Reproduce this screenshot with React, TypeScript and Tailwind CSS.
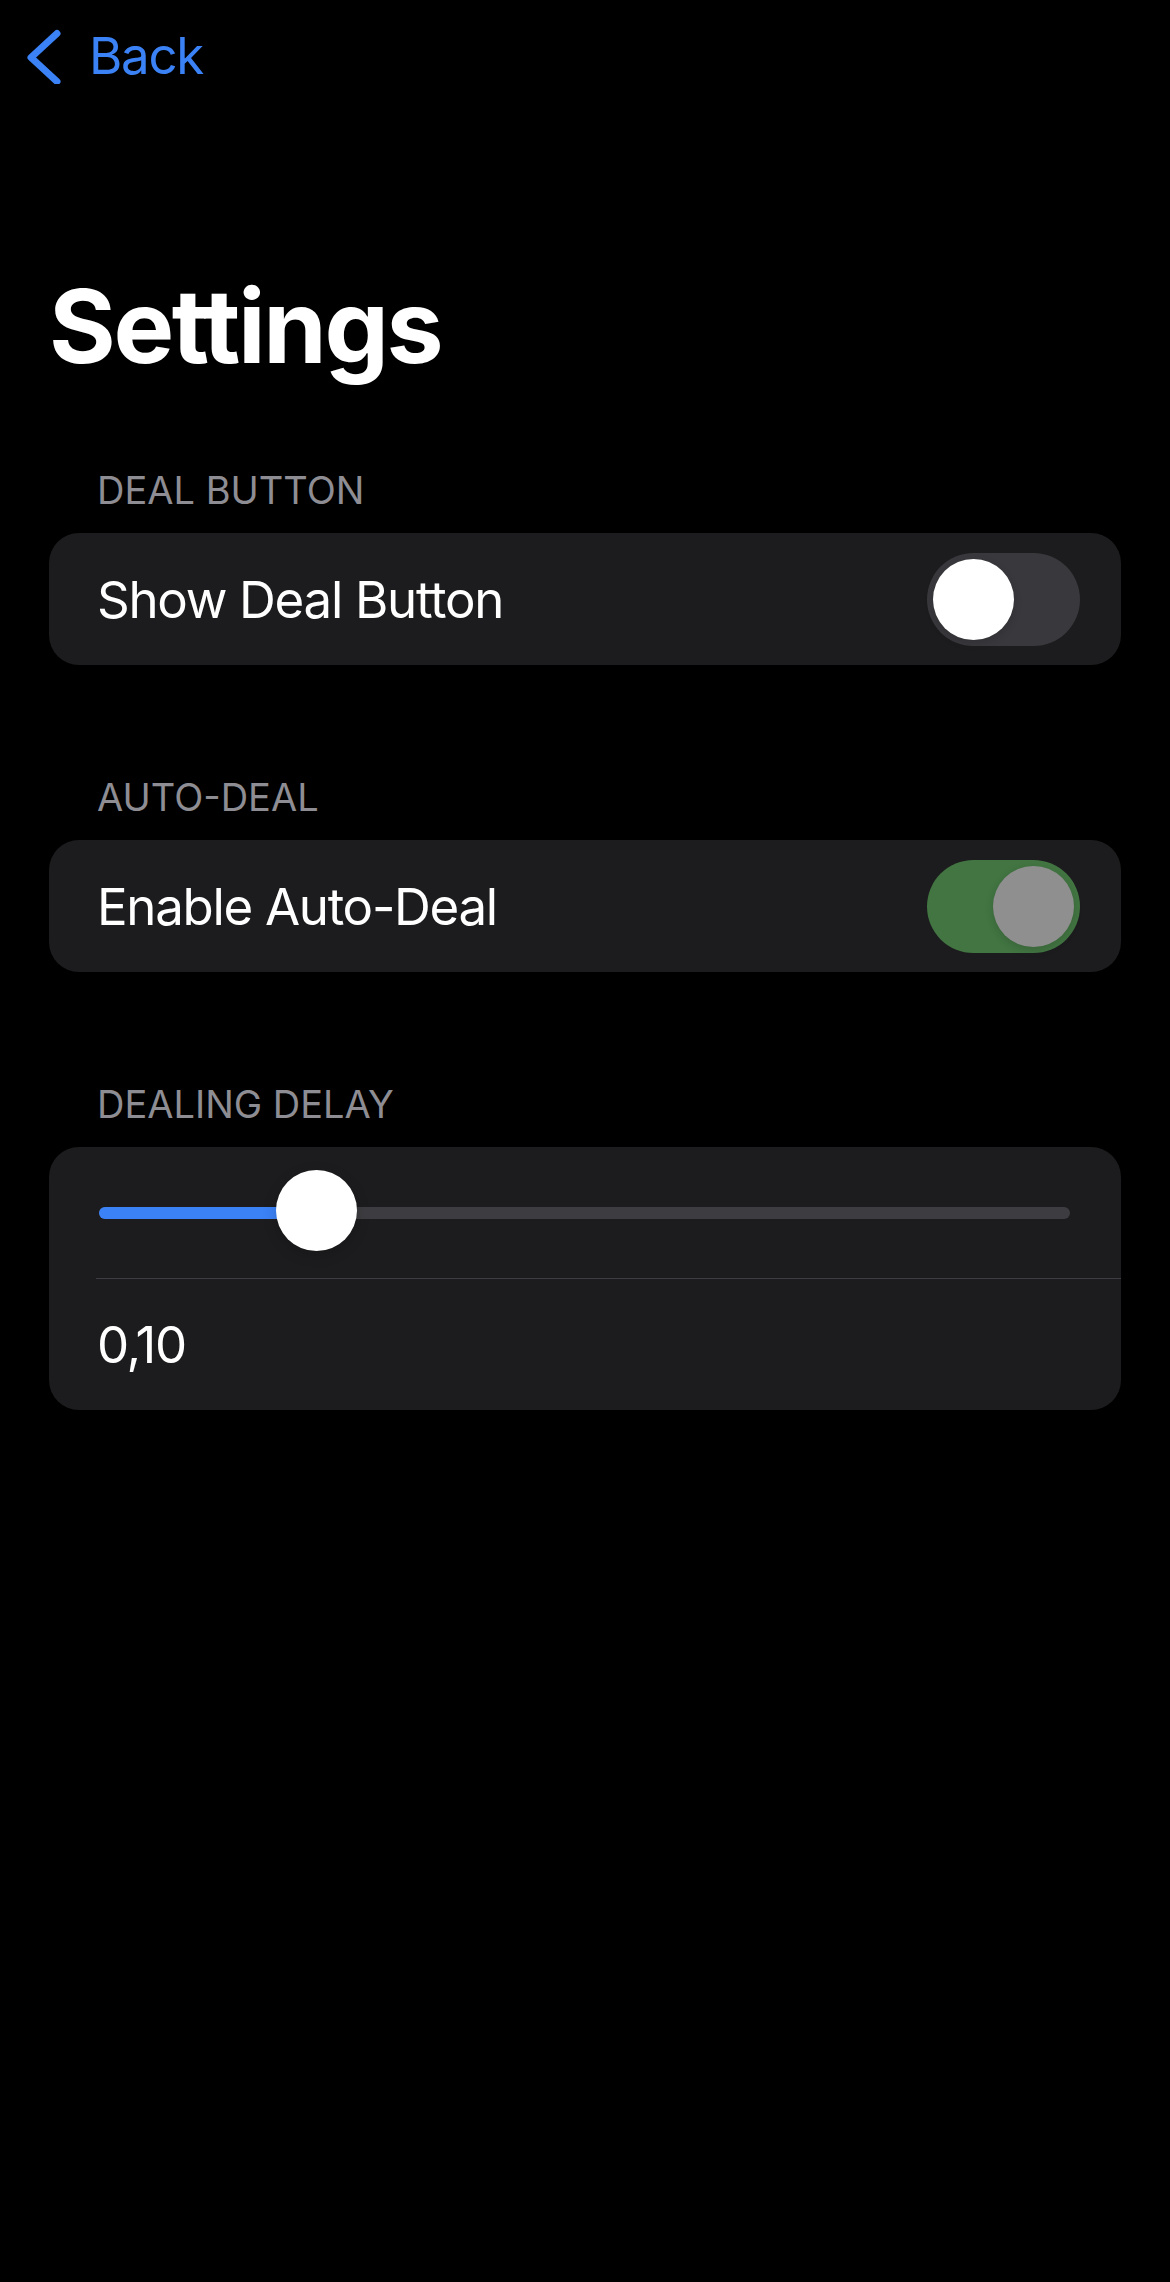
import React from 'react'

const font = { fontFamily: 'Inter, "Noto Sans", sans-serif' }

function Toggle({ on, disabled }: { on: boolean; disabled?: boolean }) {
  const track = on ? (disabled ? 'bg-[#427542]' : 'bg-[#30d158]') : 'bg-[#39393d]'
  const knob = disabled ? 'bg-[#8f8f8f]' : 'bg-white'
  return (
    <div className={`flex h-[93px] w-[153px] shrink-0 items-center rounded-full px-[6px] ${track} ${on ? 'justify-end' : 'justify-start'}`}>
      <div className={`h-[81px] w-[81px] rounded-full shadow-[0_3px_8px_rgba(0,0,0,0.15)] ${knob}`} />
    </div>
  )
}

function SectionHeader({ children, first }: { children: React.ReactNode; first?: boolean }) {
  return (
    <div className={`${first ? 'mt-[80px]' : 'mt-[109px]'} mb-[20px] h-[46px] pl-[48px] text-[38px] leading-[46px] text-[#8d8d93] uppercase`}>
      {children}
    </div>
  )
}

function ToggleRow({ label, on, disabled }: { label: string; on: boolean; disabled?: boolean }) {
  return (
    <div className="flex h-[132px] items-center justify-between rounded-[30px] bg-[#1c1c1e] pl-[48px] pr-[41px]">
      <span className="text-[51px] leading-[61px] tracking-[-1.3px] text-white">{label}</span>
      <Toggle on={on} disabled={disabled} />
    </div>
  )
}

export default function App() {
  const thumbOffset = 177

  return (
    <div className="min-h-screen w-full bg-black pt-[25px]" style={font}>
      {/* nav bar */}
      <div className="flex h-[61px] items-center">
        <svg className="ml-[27px] shrink-0" width="36" height="56" viewBox="0 0 36 56" fill="none">
          <path d="M30 5.5 L4 29.5 L30 53.5" stroke="#3b82f6" strokeWidth="7" strokeLinecap="round" strokeLinejoin="round" />
        </svg>
        <span className="ml-[26px] text-[51px] leading-[61px] tracking-[-1.3px] text-[#3b82f6]">Back</span>
      </div>

      <div className="px-[49px]">
        <h1 className="mt-[179px] text-[102px] font-bold leading-[122px] tracking-[-2.4px] text-white">Settings</h1>

        <SectionHeader first>Deal Button</SectionHeader>
        <ToggleRow label="Show Deal Button" on={false} />

        <SectionHeader>Auto-Deal</SectionHeader>
        <ToggleRow label="Enable Auto-Deal" on disabled />

        <SectionHeader>Dealing Delay</SectionHeader>
        <div className="rounded-[30px] bg-[#1c1c1e]">
          <div className="flex h-[131px] items-center pl-[50px] pr-[51px]">
            <div className="relative h-[12px] w-full rounded-full bg-[#3d3d41]">
              <div className="absolute left-0 top-0 h-[12px] rounded-full bg-[#3b82f6]" style={{ width: thumbOffset + 40 }} />
              <div
                className="absolute top-[-37px] h-[81px] w-[81px] rounded-full bg-white shadow-[0_4px_14px_rgba(0,0,0,0.18)]"
                style={{ left: thumbOffset }}
              />
            </div>
          </div>
          <div className="ml-[47px] h-px bg-[#3d3d41]" />
          <div className="flex h-[131px] items-center pl-[48px]">
            <span className="text-[51px] leading-[61px] tracking-[-1.3px] text-white">0,10</span>
          </div>
        </div>
      </div>
    </div>
  )
}
